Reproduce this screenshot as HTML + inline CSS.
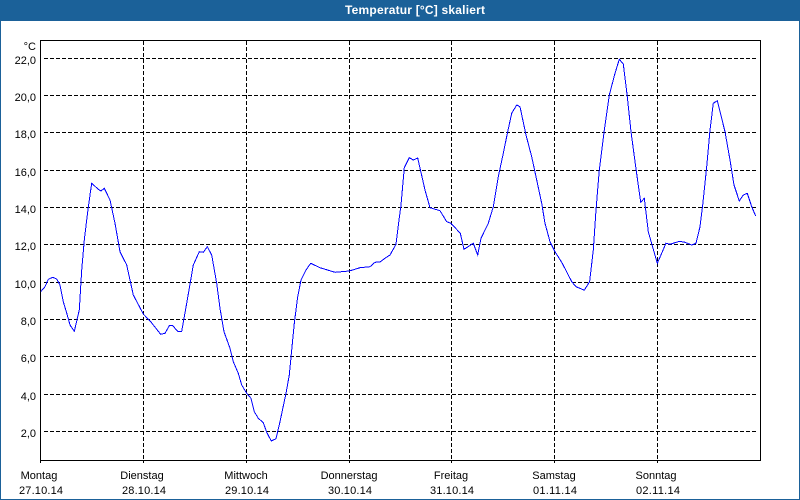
<!DOCTYPE html>
<html><head><meta charset="utf-8"><style>
html,body{margin:0;padding:0;background:#fff}
svg{display:block}
text{font-family:"Liberation Sans",sans-serif;font-size:11px;fill:#000}
.g{stroke:#000;stroke-width:1;stroke-dasharray:4 2;shape-rendering:crispEdges;fill:none}
.f{stroke:#000;stroke-width:1;shape-rendering:crispEdges;fill:none}
</style></head><body>
<svg width="800" height="500" viewBox="0 0 800 500" xmlns="http://www.w3.org/2000/svg">
<rect width="800" height="500" fill="#fff"/>
<rect x="0" y="0" width="800" height="21" fill="#1b6199"/>
<rect x="0" y="0" width="1" height="500" fill="#1b6199"/>
<rect x="799" y="0" width="1" height="500" fill="#1b6199"/>
<rect x="0" y="499" width="800" height="1" fill="#1b6199"/>
<text x="415" y="14" text-anchor="middle" textLength="140" lengthAdjust="spacing" style="font-weight:bold;font-size:12px;fill:#fff">Temperatur [°C] skaliert</text>
<g class="g">
<path d="M44 58.5H758M44 95.5H758M44 132.5H758M44 170.5H758M44 207.5H758M44 244.5H758M44 282.5H758M44 319.5H758M44 356.5H758M44 394.5H758M44 431.5H758"/>
<path d="M143.5 41V463M246.5 41V463M349.5 41V463M451.5 41V463M554.5 41V463M657.5 41V463"/>
</g>
<path class="f" d="M40.5 40.5H760.5V460.5H40.5ZM40.5 460.5V463"/>
<polyline fill="none" stroke="#0000ff" stroke-width="1" shape-rendering="crispEdges" points="40.7,291.7 45,286.7 48.3,279.3 52.7,277.3 56.7,279 60,285 63.3,301.7 66.7,313 70,325 74.3,331.3 79.3,310 81.7,270 84.3,240 87.3,215 90,195 91.7,183.3 98.3,189.3 101,191 104.3,188.3 110,200 115,223.3 120,251.7 126.7,265 133.3,295 143.3,314 150.7,321.7 160.7,334.3 165,333.3 169.3,325.7 172.7,325.7 177.7,331.3 181.7,331.3 186.7,303.3 193.3,265 199.3,251.7 203.3,252.3 207.3,246.7 211.7,255 216.7,283.3 220,308.3 224,331.7 230,348.3 233.3,361.7 238.3,373.3 241.7,385 246.7,393.3 251,398.3 254.3,411.7 258.3,418.3 263.3,422.7 266.7,432.3 271.3,441 276,438.7 280,421.7 286,393.3 289.3,375 291.7,350 294.3,323.3 297.7,296.7 301,280 306,270 310.7,263.3 320,267.7 335,272.3 349.3,271 360,267.7 370,266.7 375,262.3 380,262 385,258.3 390,255 396,244.3 399,220 401,205 404.3,167.7 409.3,157.7 413.3,160 417.7,158 425,190 430,207.7 440,210.7 446.7,221.7 451,223.3 460.3,233.3 464,249.3 473.3,243.3 477.7,255 481,238.3 488.3,223.3 493.3,206.7 498.3,176.7 503.3,153.3 507.7,131.7 511.7,113.3 516.7,105 520,106.7 526,135 531.7,156.7 536.7,180 541.7,203.3 545,223.3 550,241.7 555,251.7 562.3,263.3 571.7,281.7 576,286.7 584.3,290.2 589.6,281.7 593.3,250 596,210 599.3,170 604.3,130 609.3,95 615,73.3 619.3,59.3 623.3,64 627.3,96.7 631,131.7 635.7,166.7 640.7,202.3 644.3,198.3 648.3,231.7 657.3,263.3 666,243.3 670,244.3 679.3,241.3 685,242.3 691.7,245 696,243.3 700,226.7 702.7,205 706.7,166.7 710,130 713.3,103.3 717.3,100.7 725,131.7 730,160 734,185 739.3,201 743.3,195 747.3,193.3 751.7,206.7 755.7,216"/>
<g text-anchor="end">
<text x="36" y="50">°C</text>
<text x="36" y="64">22,0</text>
<text x="36" y="101">20,0</text>
<text x="36" y="138">18,0</text>
<text x="36" y="176">16,0</text>
<text x="36" y="213">14,0</text>
<text x="36" y="250">12,0</text>
<text x="36" y="288">10,0</text>
<text x="36" y="325">8,0</text>
<text x="36" y="362">6,0</text>
<text x="36" y="400">4,0</text>
<text x="36" y="437">2,0</text>
</g>
<g text-anchor="middle">
<text x="39" y="479">Montag</text><text x="41" y="494" textLength="44" lengthAdjust="spacing">27.10.14</text>
<text x="142" y="479">Dienstag</text><text x="144" y="494" textLength="44" lengthAdjust="spacing">28.10.14</text>
<text x="246" y="479">Mittwoch</text><text x="247" y="494" textLength="44" lengthAdjust="spacing">29.10.14</text>
<text x="349" y="479">Donnerstag</text><text x="350" y="494" textLength="44" lengthAdjust="spacing">30.10.14</text>
<text x="451" y="479">Freitag</text><text x="452" y="494" textLength="44" lengthAdjust="spacing">31.10.14</text>
<text x="554" y="479">Samstag</text><text x="555" y="494" textLength="44" lengthAdjust="spacing">01.11.14</text>
<text x="656" y="479">Sonntag</text><text x="658" y="494" textLength="44" lengthAdjust="spacing">02.11.14</text>
</g>
</svg>
</body></html>
